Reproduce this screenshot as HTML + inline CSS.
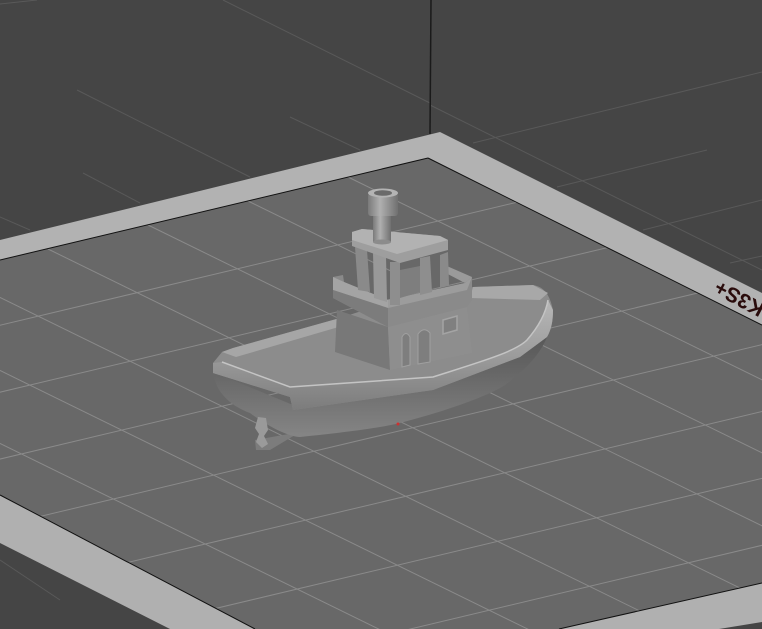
<!DOCTYPE html>
<html><head><meta charset="utf-8"><style>
html,body{margin:0;padding:0;background:#454545;overflow:hidden;width:762px;height:629px}
svg{display:block}
</style></head><body>
<svg width="762" height="629" viewBox="0 0 762 629" xmlns="http://www.w3.org/2000/svg">
<defs>
<clipPath id="bed"><polygon points="428,158 762,325 762,583 559,629 255,629 0,495 0,260"/></clipPath>
<linearGradient id="hull" x1="0" y1="0" x2="0" y2="1">
<stop offset="0" stop-color="#4e4e4e"/><stop offset="0.45" stop-color="#646464"/><stop offset="1" stop-color="#858585"/></linearGradient>
<linearGradient id="rim" x1="0" y1="0" x2="0" y2="1">
<stop offset="0" stop-color="#b8b8b8"/><stop offset="0.5" stop-color="#9c9c9c"/><stop offset="1" stop-color="#7c7c7c"/></linearGradient>
<linearGradient id="chim" x1="0" y1="0" x2="1" y2="0">
<stop offset="0" stop-color="#7a7a7a"/><stop offset="0.4" stop-color="#b0b0b0"/><stop offset="1" stop-color="#707070"/></linearGradient>
</defs>
<rect width="762" height="629" fill="#454545"/>
<g stroke="#595959" stroke-width="1">
<line x1="223" y1="0" x2="430" y2="103"/>
<line x1="77" y1="90" x2="250" y2="177"/>
<line x1="290" y1="117" x2="360" y2="150"/>
<line x1="83" y1="173" x2="140" y2="203"/>
<line x1="0" y1="217" x2="30" y2="230"/>
<line x1="0" y1="4" x2="37" y2="0"/>
<line x1="430" y1="105" x2="762" y2="270"/>
<line x1="473" y1="143" x2="762" y2="72"/>
<line x1="557" y1="187" x2="707" y2="150"/>
<line x1="643" y1="230" x2="762" y2="200"/>
<line x1="730" y1="263" x2="762" y2="256"/>
<line x1="0" y1="560" x2="60" y2="600"/>
<line x1="95" y1="590" x2="130" y2="582"/>
</g>
<polygon points="0,240 440,132 762,293 762,327 428,160 0,264" fill="#b2b2b2"/>
<polygon points="0,495 255,629 170,629 0,543" fill="#b0b0b0"/>
<polygon points="559,629 762,583 762,622 719,629" fill="#b0b0b0"/>
<polygon points="428,158 762,325 762,583 559,629 255,629 0,495 0,260" fill="#686868"/>
<g clip-path="url(#bed)" stroke="#8a8a8a" stroke-width="1">
<line x1="348" y1="177" x2="1348" y2="667"/>
<line x1="248" y1="201" x2="1248" y2="691"/>
<line x1="148" y1="225" x2="1148" y2="715"/>
<line x1="48" y1="249" x2="1048" y2="739"/>
<line x1="-52" y1="272" x2="948" y2="762"/>
<line x1="-152" y1="296" x2="848" y2="786"/>
<line x1="-252" y1="320" x2="748" y2="810"/>
<line x1="-352" y1="344" x2="648" y2="834"/>
<line x1="518" y1="202" x2="-482" y2="440"/>
<line x1="610" y1="247" x2="-390" y2="485"/>
<line x1="702" y1="292" x2="-298" y2="530"/>
<line x1="794" y1="337" x2="-206" y2="575"/>
<line x1="886" y1="382" x2="-114" y2="620"/>
<line x1="978" y1="427" x2="-22" y2="665"/>
<line x1="1070" y1="472" x2="70" y2="710"/>
<line x1="1162" y1="517" x2="162" y2="755"/>
</g>
<line x1="0" y1="260" x2="428" y2="158" stroke="#111" stroke-width="1"/>
<line x1="428" y1="158" x2="762" y2="325" stroke="#111" stroke-width="1"/>
<line x1="0" y1="495" x2="255" y2="629" stroke="#111" stroke-width="1"/>
<line x1="559" y1="629" x2="762" y2="583" stroke="#111" stroke-width="1"/>
<line x1="431" y1="0" x2="430" y2="134" stroke="#1a1a1a" stroke-width="1.5"/>
<text x="0" y="0" transform="translate(740,297) rotate(208)" text-anchor="middle" dominant-baseline="middle" font-family="Liberation Sans, sans-serif" font-weight="bold" font-size="21" fill="#2a0c0c">K3S+</text>

<polygon points="255,440 300,432 270,450 256,450" fill="#7c7c7c"/>
<path d="M213,372 C215,390 228,405 250,413 C270,428 290,437 300,437 C340,433 380,428 400,423 C450,410 490,395 505,385 C525,370 540,355 547,337 L553,310 L520,350 L433,386 L293,405 Z" fill="url(#hull)"/>
<path d="M213,363 L222,352 L233,348 L340,318 L380,305 L473,287 L533,285 C545,287 550,296 553,310 C553,322 551,330 547,337 L520,357 L433,390 L293,410 L290,397 L213,373 Z" fill="#8c8c8c"/>
<path d="M222,352 L233,348 L340,318 L342,326 L236,357 Z" fill="#a6a6a6"/>
<path d="M473,287 L533,285 L548,293 L540,300 L470,298 Z" fill="#a8a8a8"/>
<polygon points="337,310 388,327 390,370 335,352" fill="#787878"/>
<polygon points="388,327 467,307 472,353 390,370" fill="#8e8e8e"/>
<path d="M402,367 L402,337 Q406,330 410,337 L410,365 Z" fill="#7e7e7e" stroke="#a0a0a0" stroke-width="1"/>
<path d="M418,364 L418,334 Q424,326 430,333 L430,362 Z" fill="#7e7e7e" stroke="#a0a0a0" stroke-width="1"/>
<polygon points="443,320 457,316 457,330 443,334" fill="#808080" stroke="#a4a4a4" stroke-width="1.5"/>
<path d="M213,373 L213,363 L222,362 L290,387 L433,377 C480,362 515,352 527,340 C540,325 546,312 548,300 L553,310 C553,322 551,330 547,337 L520,357 L433,390 L293,410 L290,397 Z" fill="url(#rim)"/>
<path d="M222,362 L290,387 L433,377 C480,362 515,352 527,340 C540,325 546,312 548,300" fill="none" stroke="#c4c4c4" stroke-width="1.5"/>
<path d="M258,417 L266,418 L268,430 L264,436 L268,444 L262,448 L256,442 L259,434 L255,428 Z" fill="#9a9a9a"/>
<circle cx="398" cy="424" r="1.5" fill="#d03030"/>
<polygon points="333,277 343,275 344,282 388,300 465,283 472,277 472,300 467,307 388,327 333,298" fill="#8a8a8a"/>
<polygon points="333,277 344,282 388,300 388,308 333,290" fill="#a4a4a4"/>
<polygon points="388,300 465,283 472,277 467,290 388,308" fill="#9c9c9c"/>
<polygon points="333,290 388,308 388,327 333,298" fill="#7c7c7c"/>
<polygon points="440,263 472,277 465,283 440,270" fill="#9a9a9a"/>
<polygon points="355,247 367,250 370,292 358,290" fill="#8a8a8a"/>
<polygon points="373,252 386,256 387,302 374,298" fill="#999"/>
<polygon points="390,262 400,262 400,305 390,305" fill="#8e8e8e"/>
<polygon points="420,258 430,256 432,292 420,295" fill="#8e8e8e"/>
<polygon points="440,255 448,252 449,285 440,288" fill="#8a8a8a"/>
<polygon points="400,270 420,266 420,292 400,298" fill="#7e7e7e"/>
<path d="M352,232 L362,229 L440,236 L448,240 L448,250 L400,263 L352,246 Z" fill="#9e9e9e"/>
<path d="M352,232 L362,229 L440,236 L448,240 L397,254 L352,240 Z" fill="#b2b2b2"/>
<rect x="373" y="214" width="18" height="28" fill="url(#chim)"/>
<ellipse cx="382" cy="242" rx="9" ry="2.5" fill="#8c8c8c"/>
<rect x="368" y="193" width="30" height="23" rx="3" fill="url(#chim)"/>
<ellipse cx="383" cy="193" rx="15" ry="4.5" fill="#b4b4b4"/>
<ellipse cx="383" cy="193" rx="9" ry="2.8" fill="#6a6a6a"/>
</svg>
</body></html>
